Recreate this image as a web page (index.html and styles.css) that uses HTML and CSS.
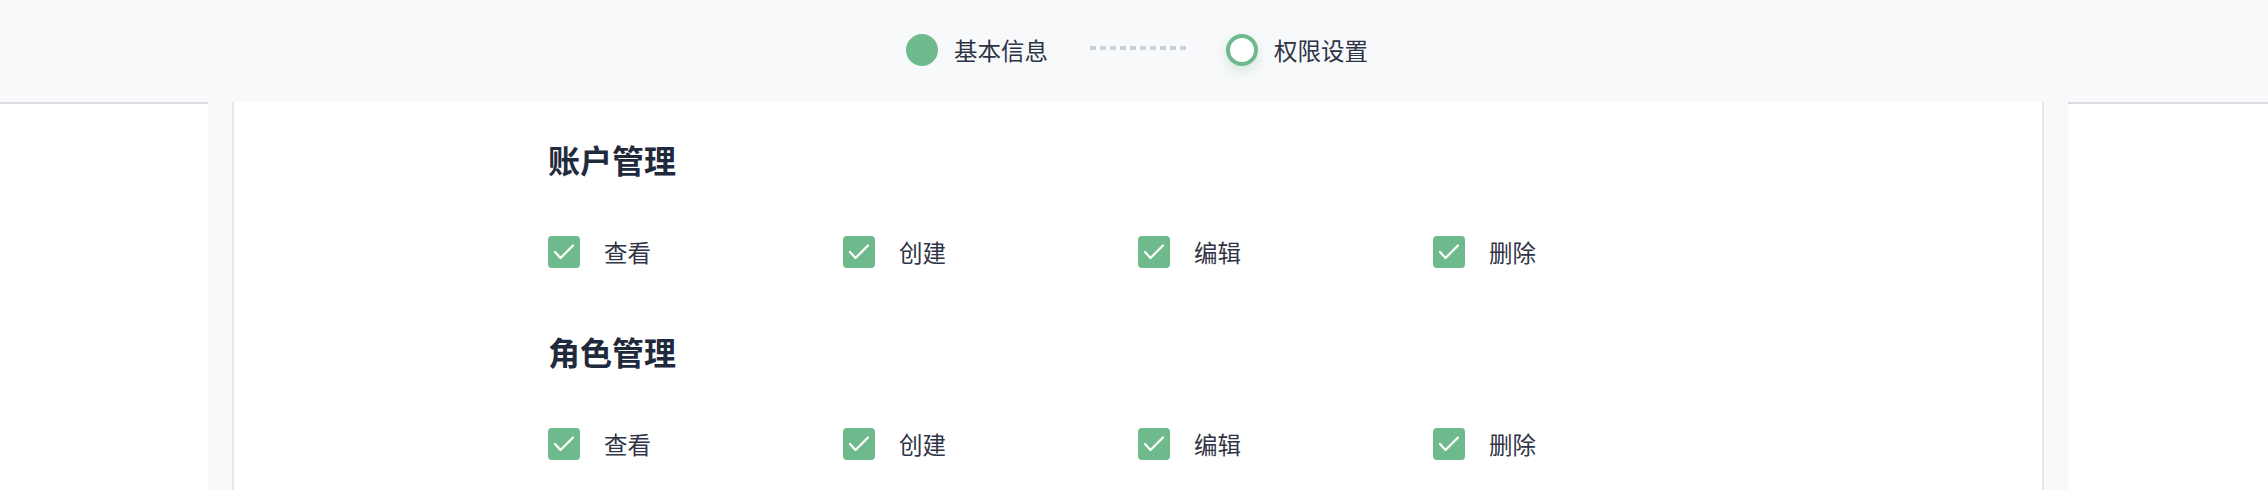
FILE: index.html
```html
<!DOCTYPE html>
<html lang="zh-CN">
<head>
<meta charset="utf-8">
<title>权限设置</title>
<link rel="stylesheet" href="styles.css">
</head>
<body>
<header class="steps-bar">
  <div class="steps">
    <div class="step step-done">
      <span class="step-dot"></span>
      <span class="step-label">基本信息</span>
    </div>
    <span class="step-connector"></span>
    <div class="step step-current">
      <span class="step-dot"></span>
      <span class="step-label">权限设置</span>
    </div>
  </div>
</header>
<main class="shell">
  <section class="card">
    <div class="perm-content">
      <div class="perm-group">
        <h2 class="perm-title">账户管理</h2>
        <div class="perm-grid">
          <label class="perm-item"><span class="checkbox"><svg viewBox="0 0 32 32"><polyline points="7,16 12.5,22 25,9.5"/></svg></span><span class="perm-label">查看</span></label>
          <label class="perm-item"><span class="checkbox"><svg viewBox="0 0 32 32"><polyline points="7,16 12.5,22 25,9.5"/></svg></span><span class="perm-label">创建</span></label>
          <label class="perm-item"><span class="checkbox"><svg viewBox="0 0 32 32"><polyline points="7,16 12.5,22 25,9.5"/></svg></span><span class="perm-label">编辑</span></label>
          <label class="perm-item"><span class="checkbox"><svg viewBox="0 0 32 32"><polyline points="7,16 12.5,22 25,9.5"/></svg></span><span class="perm-label">删除</span></label>
        </div>
      </div>
      <div class="perm-group">
        <h2 class="perm-title">角色管理</h2>
        <div class="perm-grid">
          <label class="perm-item"><span class="checkbox"><svg viewBox="0 0 32 32"><polyline points="7,16 12.5,22 25,9.5"/></svg></span><span class="perm-label">查看</span></label>
          <label class="perm-item"><span class="checkbox"><svg viewBox="0 0 32 32"><polyline points="7,16 12.5,22 25,9.5"/></svg></span><span class="perm-label">创建</span></label>
          <label class="perm-item"><span class="checkbox"><svg viewBox="0 0 32 32"><polyline points="7,16 12.5,22 25,9.5"/></svg></span><span class="perm-label">编辑</span></label>
          <label class="perm-item"><span class="checkbox"><svg viewBox="0 0 32 32"><polyline points="7,16 12.5,22 25,9.5"/></svg></span><span class="perm-label">删除</span></label>
        </div>
      </div>
    </div>
  </section>
</main>
</body>
</html>
```
FILE: styles.css
```css
* {
  box-sizing: border-box;
}

html, body {
  margin: 0;
  padding: 0;
  height: 100%;
  background: #ffffff;
  overflow: hidden;
}

body {
  font-family: "Noto Sans CJK SC", "Noto Sans", sans-serif;
  color: #2f3547;
  display: flex;
  flex-direction: column;
}

.steps-bar {
  height: 104px;
  flex: none;
  background: #f8f9fb;
  border-bottom: 2px solid #dcdde4;
  display: flex;
  align-items: center;
  justify-content: center;
  padding: 0 0 3px 6px;
}

.steps {
  display: flex;
  align-items: center;
}

.step {
  display: flex;
  align-items: center;
  gap: 16px;
}

.step-dot {
  width: 32px;
  height: 32px;
  border-radius: 50%;
  flex: none;
}

.step-done .step-dot {
  background: #6fba8c;
}

.step-current .step-dot {
  background: #ffffff;
  border: 4px solid #6fba8c;
  box-shadow: 0 5px 12px rgba(111, 186, 140, 0.28);
}

.step-label {
  font-size: 23.5px;
  line-height: 32px;
  color: #2c3345;
}

.step-connector {
  width: 96px;
  height: 4px;
  margin: 0 40px 3px 42px;
  background: repeating-linear-gradient(to right, #cdd2da 0 6px, transparent 6px 10px);
}

.shell {
  flex: 1;
  margin: -2px 200px 0 208px;
  padding: 0 24px;
  background: #f8f9fb;
  display: flex;
}

.card {
  flex: 1;
  background: #ffffff;
  border-left: 2px solid #e5e7eb;
  border-right: 2px solid #e5e7eb;
}

.perm-content {
  width: 1180px;
  margin: 0 auto;
  padding-top: 35px;
  display: flex;
  flex-direction: column;
  gap: 61px;
}

.perm-title {
  margin: 0 0 55px;
  font-size: 32px;
  line-height: 44px;
  font-weight: 700;
  color: #1f2a3d;
}

.perm-grid {
  display: grid;
  grid-template-columns: repeat(4, 1fr);
}

.perm-item {
  display: flex;
  align-items: center;
  gap: 24px;
  height: 32px;
}

.checkbox {
  width: 32px;
  height: 32px;
  border-radius: 4px;
  background: #6fba8c;
  display: flex;
  flex: none;
}

.checkbox svg {
  width: 32px;
  height: 32px;
  fill: none;
  stroke: #ffffff;
  stroke-width: 2.2;
  stroke-linecap: round;
  stroke-linejoin: round;
}

.perm-label {
  font-size: 23.5px;
  line-height: 32px;
  color: #2f3547;
}
```
